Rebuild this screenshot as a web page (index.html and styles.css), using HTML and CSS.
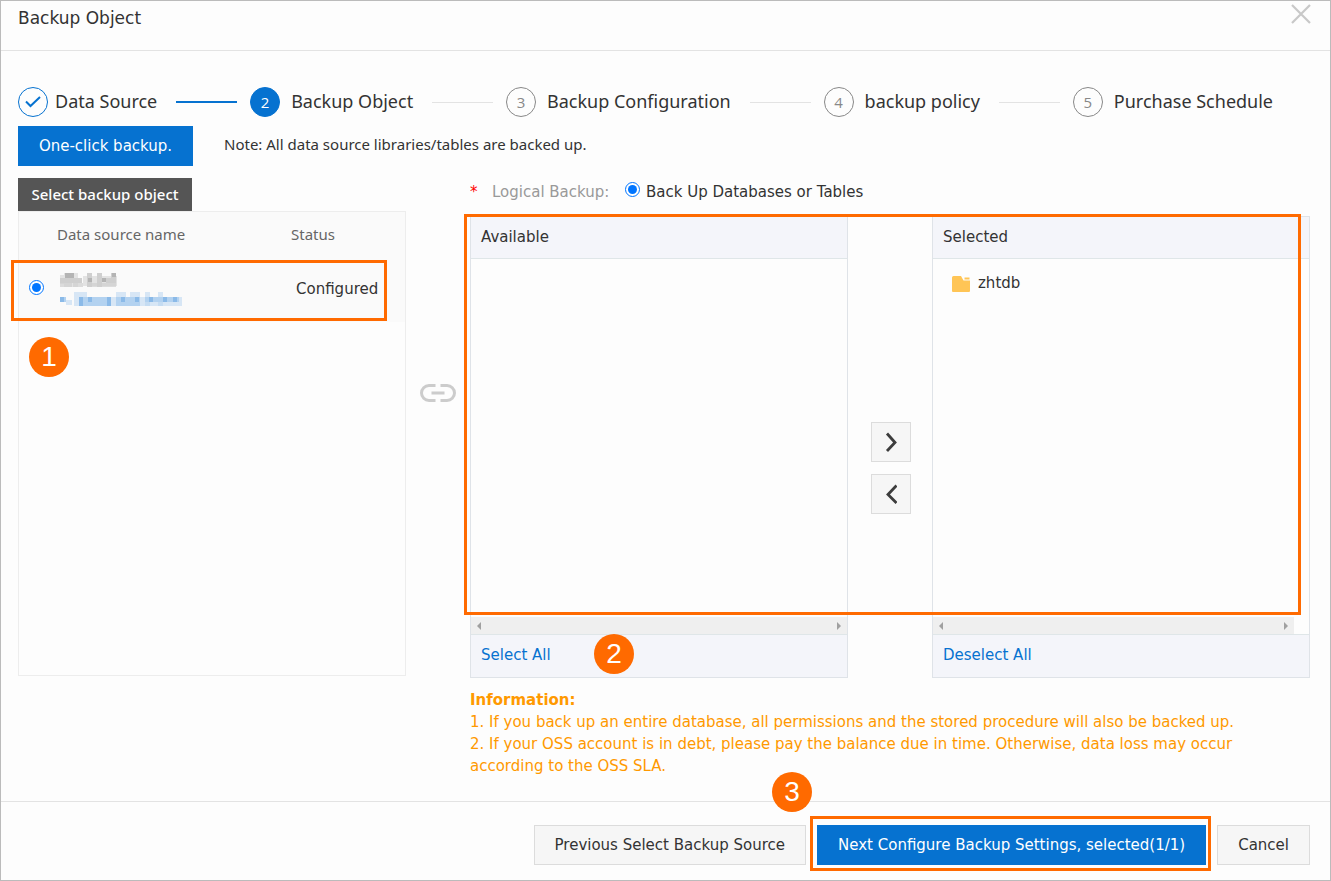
FILE: index.html
```html
<!DOCTYPE html>
<html lang="en">
<head>
<meta charset="utf-8">
<title>Backup Object</title>
<link rel="stylesheet" href="styles.css">
</head>
<body>
<main class="dialog">
  <header class="dialog-header">
    <h1 class="dialog-title">Backup Object</h1>
    <button class="close" type="button" aria-label="Close">
      <svg width="20" height="20" viewBox="0 0 20 20"><path d="M1 1L19 19M19 1L1 19" fill="none" stroke="#c8c8c8" stroke-width="2.200"/></svg>
    </button>
  </header>

  <div class="dialog-body">
    <ol class="steps">
      <li class="step done">
        <span class="step-dot"><svg width="16" height="12" viewBox="0 0 16 12"><path d="M1 5.500L5.500 10L15 1" fill="none" stroke="#0672d0" stroke-width="2"/></svg></span>
        <span class="step-label">Data Source</span>
      </li>
      <li class="step-line line-done"></li>
      <li class="step current"><span class="step-dot">2</span><span class="step-label">Backup Object</span></li>
      <li class="step-line"></li>
      <li class="step"><span class="step-dot">3</span><span class="step-label">Backup Configuration</span></li>
      <li class="step-line"></li>
      <li class="step"><span class="step-dot">4</span><span class="step-label">backup policy</span></li>
      <li class="step-line"></li>
      <li class="step"><span class="step-dot">5</span><span class="step-label">Purchase Schedule</span></li>
    </ol>

    <div class="quick">
      <button class="btn primary quick-btn" type="button">One-click backup.</button>
      <p class="note">Note: All data source libraries/tables are backed up.</p>
    </div>

    <div class="columns">
      <section class="sources">
        <h2 class="tab">Select backup object</h2>
        <div class="panel">
          <table class="source-table">
            <thead>
              <tr><th class="col-radio"></th><th class="col-name">Data source name</th><th>Status</th></tr>
            </thead>
            <tbody>
              <tr>
                <td class="col-radio"><input class="radio" type="radio" name="source" checked aria-label="Data source"></td>
                <td class="col-name">
                  <svg class="masked" width="124" height="36" viewBox="0 0 124 36" aria-hidden="true">
                    <g fill="#cfcfcf">
                      <path d="M1 3h4v9h-4zM5 1h14v14h-14zM24 4h34v10h-34z" opacity=".55"/>
                      <path d="M1 6h22v5h-22zM28 1h5v14h-5zM38 1h5v14h-5zM47 6h6v5h-6zM52 1h5v10h-5z"/>
                      <path d="M1 11h12v4h-12zM14 11h10v4h-10zM33 11h24v4h-24z" opacity=".7"/>
                    </g>
                    <path d="M6 1h9v5h-9zM29 6h4v4h-4zM43 6h4v4h-4zM53 1h4v4h-4z" fill="#b4b4b4"/>
                    <g fill="#b3d2f0">
                      <path d="M15 20h13v14h-13zM57 20h10v14h-10zM71 20h10v14h-10zM86 20h5v14h-5zM99 20h5v14h-5z" opacity=".5"/>
                      <path d="M1 25h6v5h-6zM20 25h32v9h-32zM57 25h24v9h-24zM86 25h34v5h-34z"/>
                      <path d="M7 28h6v5h-6zM52 25h5v9h-5zM81 25h5v9h-5zM86 30h33v4h-33zM119 25h4v9h-4z" opacity=".5"/>
                    </g>
                    <path d="M1 25h4v5h-4zM20 25h4v9h-4zM29 25h4v5h-4zM48 25h4v9h-4zM62 25h4v5h-4zM76 25h4v5h-4zM90 25h4v5h-4zM104 25h4v5h-4zM114 25h4v5h-4z" fill="#8bbae8"/>
                  </svg>
                </td>
                <td class="status">Configured</td>
              </tr>
            </tbody>
          </table>
          <div class="mark mark-source"></div>
          <span class="badge badge-1">1</span>
        </div>
      </section>

      <div class="link-col">
        <svg width="36" height="18" viewBox="0 0 36 18"><path d="M15.500 1.500H9A7.500 7.500 0 0 0 9 16.500H15.500M20.500 1.500H27A7.500 7.500 0 0 1 27 16.500H20.500M11.500 9H24.500" fill="none" stroke="#ccc" stroke-width="3"/></svg>
      </div>

      <section class="objects">
        <div class="type-row">
          <span class="required">*</span>
          <span class="type-label">Logical Backup:</span>
          <label class="type-option"><input class="radio" type="radio" name="type" checked><span>Back Up Databases or Tables</span></label>
        </div>

        <div class="transfer">
          <div class="list">
            <div class="list-head">Available</div>
            <div class="list-body"></div>
            <div class="scroll">
              <svg width="4" height="8" viewBox="0 0 4 8"><path d="M4 0V8L0 4z" fill="#a0a0a0"/></svg>
              <svg width="4" height="8" viewBox="0 0 4 8"><path d="M0 0V8L4 4z" fill="#a0a0a0"/></svg>
            </div>
            <div class="list-foot"><a class="link" href="#">Select All</a></div>
          </div>

          <div class="moves">
            <button class="move" type="button" aria-label="Move right"><svg width="12" height="20" viewBox="0 0 12 20"><path d="M2 1.500L10 10.500L2 19" fill="none" stroke="#3c3c3c" stroke-width="2.800"/></svg></button>
            <button class="move" type="button" aria-label="Move left"><svg width="12" height="20" viewBox="0 0 12 20"><path d="M11.500 1.500L3 10.500L11.500 19" fill="none" stroke="#3c3c3c" stroke-width="2.800"/></svg></button>
          </div>

          <div class="list">
            <div class="list-head">Selected</div>
            <div class="list-body">
              <div class="node">
                <svg width="18" height="16" viewBox="0 0 18 16"><path d="M1.500 0H9L11.500 4.500H18V15Q18 16 17 16H1Q0 16 0 15V1.500Q0 0 1.500 0z" fill="#ffc556"/><path d="M12.500 1.500h5v2h-5z" fill="#ffc556"/></svg>
                <span>zhtdb</span>
              </div>
            </div>
            <div class="scroll scroll-short">
              <svg width="4" height="8" viewBox="0 0 4 8"><path d="M4 0V8L0 4z" fill="#a0a0a0"/></svg>
              <svg width="4" height="8" viewBox="0 0 4 8"><path d="M0 0V8L4 4z" fill="#a0a0a0"/></svg>
            </div>
            <div class="list-foot"><a class="link" href="#">Deselect All</a></div>
          </div>
          <div class="mark mark-transfer"></div>
          <span class="badge badge-2">2</span>
        </div>

        <div class="info">
          <strong>Information:</strong>
          <p>1. If you back up an entire database, all permissions and the stored procedure will also be backed up.</p>
          <p>2. If your OSS account is in debt, please pay the balance due in time. Otherwise, data loss may occur according to the OSS SLA.</p>
        </div>
      </section>
    </div>
  </div>

  <footer class="dialog-footer">
    <button class="btn" type="button">Previous Select Backup Source</button>
    <div class="next">
      <button class="btn primary" type="button">Next Configure Backup Settings, selected(1/1)</button>
      <div class="mark mark-next"></div>
      <span class="badge badge-3">3</span>
    </div>
    <button class="btn" type="button">Cancel</button>
  </footer>
</main>
</body>
</html>
```
FILE: styles.css
```css
* { box-sizing: border-box; }

body {
  margin: 0;
  color: #333;
  background: #fdfdfd;
  font: 15px/21px "DejaVu Sans", sans-serif;
}

h1, h2, p, ol { margin: 0; padding: 0; font-weight: 400; }

button { font: inherit; color: inherit; cursor: pointer; }

.dialog {
  display: flex;
  flex-direction: column;
  min-height: 100vh;
  border: 1px solid #bbb;
}

.dialog-header {
  display: flex;
  justify-content: space-between;
  height: 50px;
  padding: 3px 19px 0 17px;
  border-bottom: 1px solid #e3e3e3;
}

.dialog-title { font: 17px/28px "DejaVu Sans", sans-serif; }

.close {
  display: flex;
  width: 20px;
  height: 20px;
  padding: 0;
  border: 0;
  background: none;
}

.dialog-body { flex: 1; padding: 36px 20px 0 17px; }

.steps {
  display: flex;
  align-items: center;
  gap: 13px;
  height: 30px;
  padding-right: 31px;
  list-style: none;
}

.step { display: flex; align-items: center; gap: 11px; }
.step.done { gap: 7px; }

.step-dot {
  display: flex;
  align-items: center;
  justify-content: center;
  width: 30px;
  height: 30px;
  border: 1px solid #888;
  border-radius: 50%;
  color: #888;
  font: 15px/28px "Open Sans", sans-serif;
}

.done .step-dot { border-color: #0672d0; }
.current .step-dot { border-color: #0672d0; background: #0672d0; color: #fff; }

.step-label {
  padding-right: 6px;
  font: 18px/26px "Noto Sans", sans-serif;
  padding-bottom: 2px;
  white-space: nowrap;
}

.step-line { flex: 1; height: 1px; background: #e3e3e3; }
.line-done { height: 2px; background: #0672d0; }

.quick { display: flex; align-items: center; gap: 31px; margin-top: 9px; }

.note { padding-bottom: 4px; font: 15px/20px "Noto Sans", sans-serif; }

.btn {
  height: 40px;
  padding: 0 20px;
  border: 1px solid #dcdcdc;
  background: #f6f6f6;
  white-space: nowrap;
}

.primary { border-color: #0672d0; background: #0672d0; color: #fff; }

.quick-btn { width: 175px; padding: 0; }

.columns {
  display: grid;
  grid-template-columns: 388fr 64px 840fr;
  align-items: start;
  margin-top: 12px;
}

.tab {
  width: 174px;
  background: #555;
  color: #fff;
  font: 500 15px/33px "Noto Sans", sans-serif;
  text-align: center;
}

.panel {
  position: relative;
  min-height: 465px;
  border: 1px solid #ededed;
}

.source-table {
  width: 100%;
  border-collapse: collapse;
  background: #fafafa;
}

.source-table th {
  height: 47px;
  padding: 0 0 4px;
  color: #666;
  font: 15px/20px "Noto Sans", sans-serif;
  text-align: left;
}

.source-table td { height: 63px; padding: 0 0 2px; }
.col-radio { width: 37px; }
.col-name { width: 235px; }
.source-table .col-radio { padding-left: 10px; }
.source-table th.col-name { padding-left: 1px; }
.source-table .status { padding-left: 5px; }

.radio {
  width: 15px;
  height: 15px;
  margin: 0;
  accent-color: #0075ff;
}

.masked { display: block; margin-left: 3px; }
.col-radio .radio { display: block; margin-bottom: 4px; }

.link-col { display: flex; justify-content: center; padding-top: 206px; }
.link-col svg, .move svg { display: block; }

.type-row { display: flex; align-items: center; height: 29px; }
.required { width: 22px; color: #f00; }
.type-label { width: 133px; color: #999; }
.type-option { display: flex; align-items: center; gap: 6px; }
.type-option .radio { margin-bottom: 6px; }

.transfer {
  position: relative;
  display: grid;
  grid-template-columns: 1fr 84px 1fr;
  margin-top: 9px;
}

.list { border: 1px solid #dfe3e8; }

.list-head {
  height: 42px;
  padding: 0 10px;
  border-bottom: 1px solid #dfe6e8;
  background: #f4f5fa;
  line-height: 40px;
}

.list-body { min-height: 358px; padding: 14px 19px; }

.node { display: flex; align-items: center; gap: 8px; }

.scroll {
  display: flex;
  align-items: center;
  justify-content: space-between;
  height: 17px;
  padding: 0 6px;
  background: #efefef;
}

.scroll-short { margin-right: 15px; }

.list-foot {
  height: 43px;
  padding: 0 10px;
  border-top: 1px solid #dfe6e8;
  background: #f4f5fa;
  line-height: 40px;
}

.link { color: #0672d0; text-decoration: none; }

.moves {
  display: flex;
  flex-direction: column;
  align-items: center;
  gap: 12px;
  padding: 206px 0 0 2px;
}

.move {
  display: flex;
  align-items: center;
  justify-content: center;
  width: 40px;
  height: 40px;
  padding: 0;
  border: 1px solid #dcdcdc;
  background: #f6f6f6;
}

.info { margin-top: 11px; color: #f90; line-height: 22px; }

.dialog-footer {
  display: flex;
  align-items: flex-start;
  justify-content: flex-end;
  gap: 11px;
  height: 79px;
  padding: 23px 20px 0;
  border-top: 1px solid #e3e3e3;
}

.next { position: relative; }

/* Walkthrough annotations laid over the dialog */
.mark {
  position: absolute;
  border: 3px solid #ff6a00;
  pointer-events: none;
}

.mark-source { top: 48px; left: -8px; right: 18px; height: 61px; }
.mark-transfer { top: -2px; left: -6px; right: 9px; height: 401px; }
.mark-next { top: -9px; bottom: -6px; left: -7px; right: -5px; }

.badge {
  position: absolute;
  width: 40px;
  height: 40px;
  border-radius: 50%;
  background: #ff6a00;
  color: #fff;
  font: 28px/40px "Liberation Sans", sans-serif;
  text-align: center;
}

.badge-1 { top: 125px; left: 10px; }
.badge-2 { top: 418px; left: 124px; }
.badge-3 { top: -53px; left: -45px; }
```
